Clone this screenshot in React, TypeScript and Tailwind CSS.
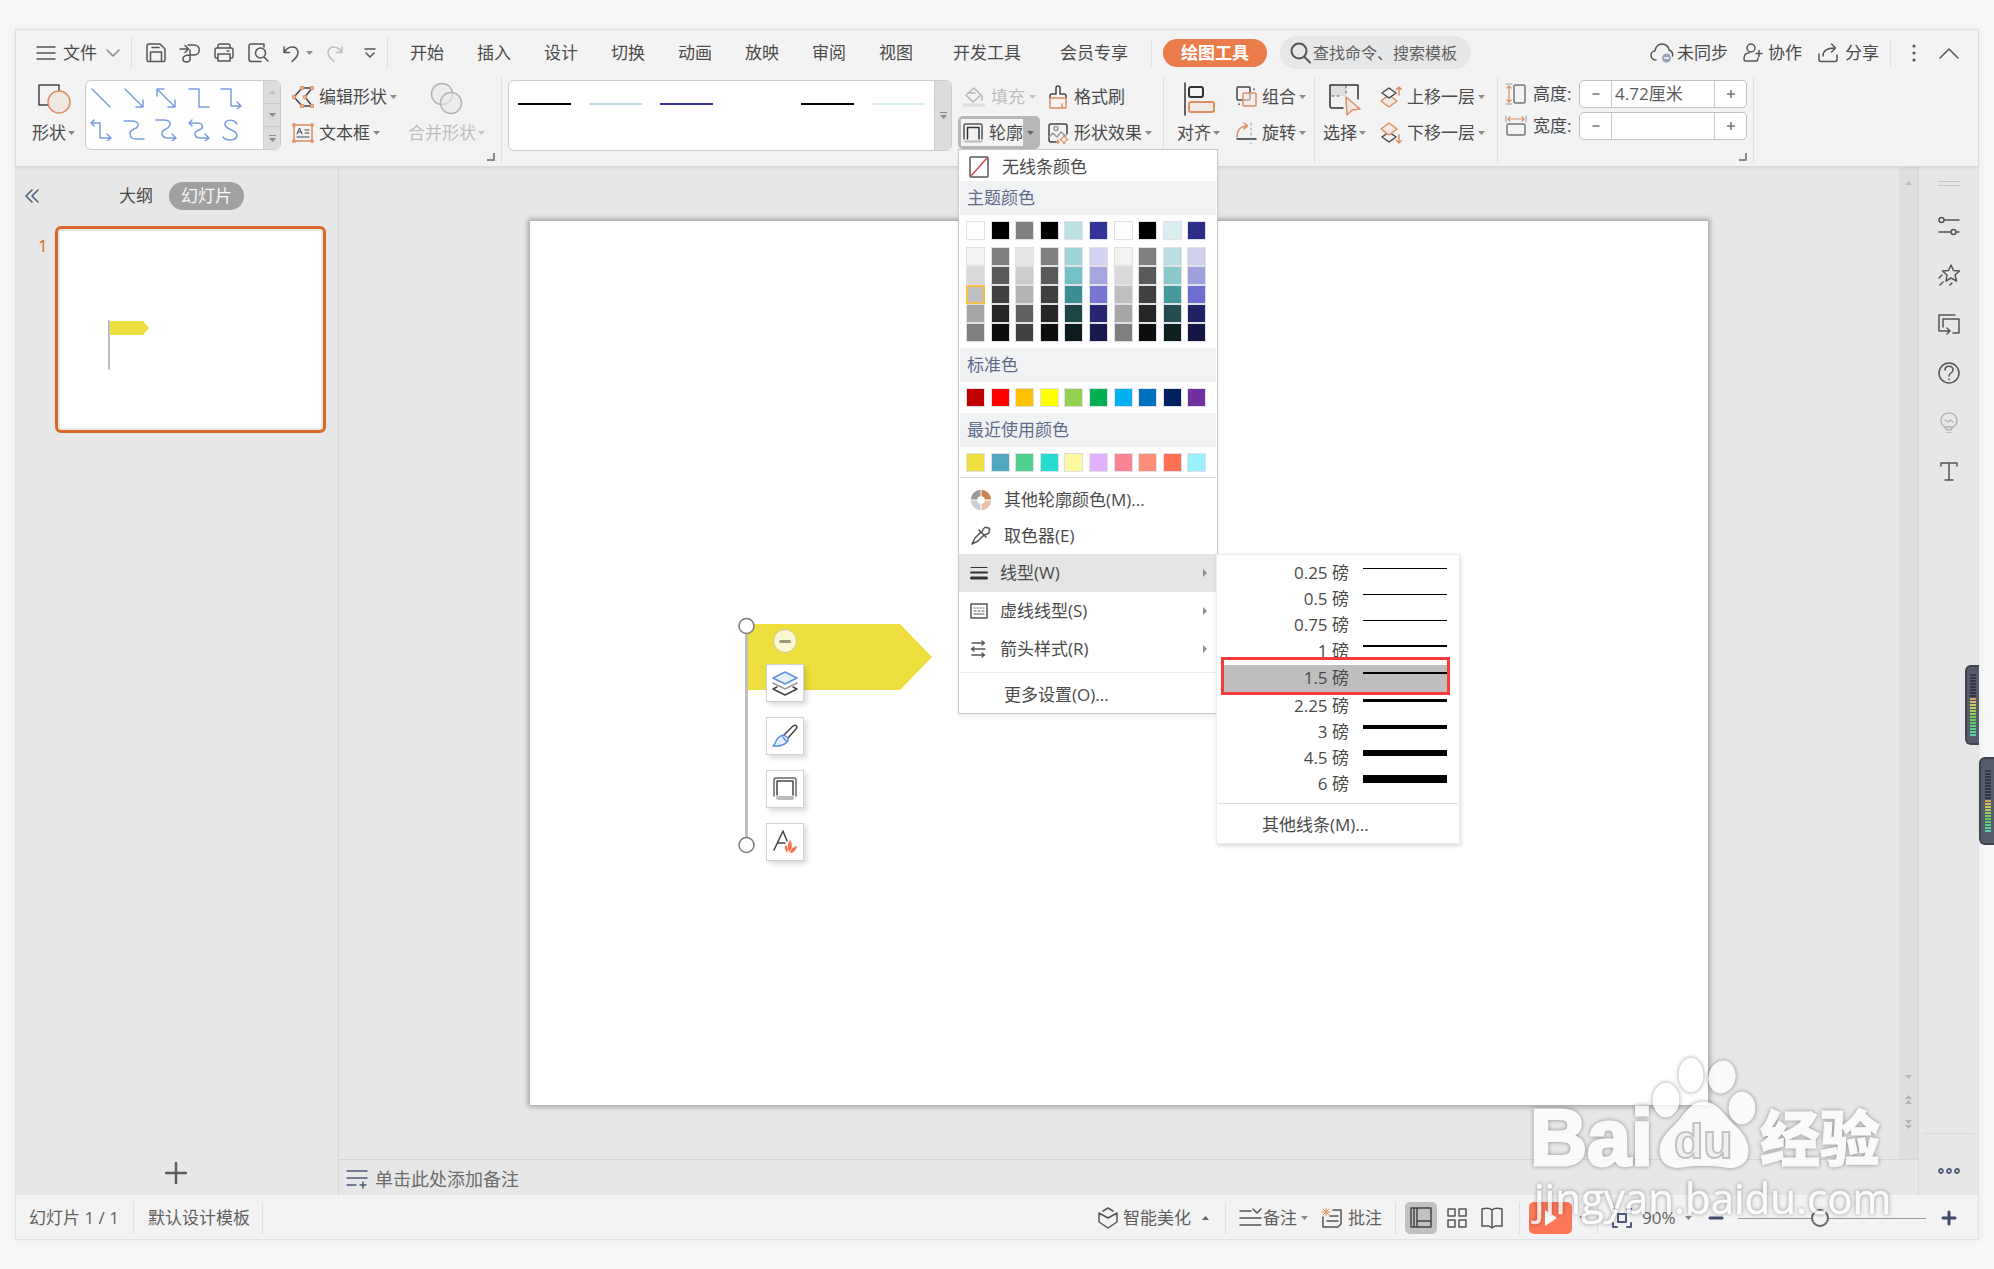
import React from "react";

const INK = "#555555";
const ORANGE = "#dc8f63";
const BLUE = "#7b9edc";

const tabs = ["开始", "插入", "设计", "切换", "动画", "放映", "审阅", "视图"];

const themeColors = ["#ffffff", "#000000", "#808080", "#000000", "#bbe0e3", "#333399", "#ffffff", "#000000", "#daedef", "#2d2d8a"];
const themeShades = [
  ["#f2f2f2", "#808080", "#e6e6e6", "#808080", "#9fd4d8", "#d2d2f0", "#f2f2f2", "#808080", "#badde0", "#cfcfee"],
  ["#d9d9d9", "#595959", "#cccccc", "#595959", "#73c1c6", "#a5a5e0", "#d9d9d9", "#595959", "#8bc8cb", "#a0a0df"],
  ["#bfbfbf", "#404040", "#b3b3b3", "#404040", "#3b8e94", "#7777d2", "#bfbfbf", "#404040", "#469a9e", "#6e6ed0"],
  ["#a6a6a6", "#262626", "#606060", "#262626", "#1d4548", "#262673", "#a6a6a6", "#262626", "#234d4f", "#212165"],
  ["#7f7f7f", "#0d0d0d", "#404040", "#0d0d0d", "#0c1b1d", "#19194d", "#7f7f7f", "#0d0d0d", "#0e1f20", "#161645"],
];
const standardColors = ["#c00000", "#ff0000", "#ffc000", "#ffff00", "#92d050", "#00b050", "#00b0f0", "#0070c0", "#002060", "#7030a0"];
const recentColors = ["#efdf3e", "#4fa8bf", "#50d18d", "#26dccf", "#fdf99f", "#e2b0ff", "#fb8494", "#fd8e7a", "#ff7150", "#9af0fa"];

const weights = [
  { label: "0.25 磅", line: 1 },
  { label: "0.5 磅", line: 1 },
  { label: "0.75 磅", line: 1 },
  { label: "1 磅", line: 2 },
  { label: "1.5 磅", line: 2 },
  { label: "2.25 磅", line: 3 },
  { label: "3 磅", line: 4 },
  { label: "4.5 磅", line: 6 },
  { label: "6 磅", line: 8 },
];

const lineStyles = ["#000000", "#bbe0e3", "#333399", "#ffffff", "#000000", "#daedef"];

// connectors of the shape gallery, 22x22 each
const connectors = [
  "M2 2L20 20",
  "M2 2L20 20M20 13V20H13",
  "M2 2L20 20M20 13V20H13M2 9V2H9",
  "M1 2H11V20H21",
  "M1 2H11V19H20M17 15L21 19L17 22",
  "M4 1L1 4L4 7M1 4H10V19H20M17 15L21 19L17 22",
  "M1 2H8C19 2 15 9 11 10C5 12 6 20 13 20H21",
  "M1 1H8C19 1 15 8 11 10C5 12 6 19 13 19H20M17 15L21 19L17 22",
  "M4 1L1 4L4 7M1 4H8C17 4 15 10 11 11C5 13 6 19 13 19H20M17 15L21 19L17 22",
  "M17 5C13 -1 4 1 5 6C6 11 18 11 17 17C16 22 6 22 3 18",
];

const Svg = ({ w = 22, h = 22, stroke = INK, sw = 1.5, className = "", children }: any) => (
  <svg
    width={w}
    height={h}
    viewBox={`0 0 ${w} ${h}`}
    fill="none"
    stroke={stroke}
    strokeWidth={sw}
    strokeLinecap="round"
    strokeLinejoin="round"
    className={`shrink-0 ${className}`}
    aria-hidden="true"
  >
    {children}
  </svg>
);

const Caret = ({ fill = "#8a8a8a", up = false, className = "" }: any) => (
  <svg width="7" height="4" viewBox="0 0 7 4" className={`shrink-0 ${className}`} aria-hidden="true">
    <path d={up ? "M0 4H7L3.5 0Z" : "M0 0H7L3.5 4Z"} fill={fill} />
  </svg>
);

const Divider = ({ className = "" }: any) => <div className={`w-px shrink-0 bg-[#e0e0e0] ${className}`} />;

const Launcher = () => (
  <Svg w={8} h={8} stroke="#8a8a8a" sw={2} className="absolute right-1.5 bottom-[5px]">
    <path d="M7 0V7H0" />
  </Svg>
);

const SmallButton = ({ icon, label, caret = true, muted = false }: any) => (
  <button className={`flex h-9 items-center ${muted ? "text-[#bdbdbd]" : ""}`}>
    <span className="mr-[5px] flex w-[22px] shrink-0 justify-center">{icon}</span>
    {label}
    {caret && <Caret className="ml-[3px]" fill={muted ? "#c4c4c4" : "#8a8a8a"} />}
  </button>
);

const BigButton = ({ icon, label, muted = false }: any) => (
  <button className={`flex flex-col items-center ${muted ? "text-[#bdbdbd]" : ""}`}>
    <span className="flex h-9 items-center pt-[3px]">{icon}</span>
    <span className="flex h-9 items-center gap-0.5">
      {label}
      <Caret fill={muted ? "#c4c4c4" : "#8a8a8a"} />
    </span>
  </button>
);

const MenuBar = () => (
  <div className="flex h-11 items-center pt-px">
    <button className="ml-5 flex items-center">
      <Svg w={20} h={14}>
        <path d="M1 1H19M1 7H19M1 13H19" />
      </Svg>
      <span className="ml-[7px]">文件</span>
      <Svg w={14} h={8} stroke="#8c8c8c" className="ml-[9px]">
        <path d="M1 1L7 7L13 1" />
      </Svg>
    </button>
    <Divider className="ml-[11px] h-8" />
    <div className="ml-[13px] flex items-center gap-3">
      <button aria-label="保存">
        <Svg>
          <path d="M2 4Q2 2 4 2H15L20 7V18Q20 19.500 18.500 19.500H3.500Q2 19.500 2 18ZM7 5.500H14M5.500 19V10H16.500V19" />
        </Svg>
      </button>
      <button aria-label="输出为PDF">
        <Svg>
          <path d="M1 7H9M6 3.500L9.500 7L6 10.500M9 3H15C22 3 22 13 15 13H11V17C11 21 4 21 4 17C4 14 7 13 11 13M11 8V13" />
        </Svg>
      </button>
      <button aria-label="打印">
        <Svg>
          <path d="M5 6V4Q5 2 7 2H15Q17 2 17 4V6M5 16H3.500Q2 16 2 14.500V8Q2 6 4 6H18Q20 6 20 8V14.500Q20 16 18.500 16H17M5 12H17V19H5ZM14 9H16" />
        </Svg>
      </button>
      <button aria-label="打印预览">
        <Svg>
          <path d="M17 5V2H4Q2 2 2 4V17Q2 19.500 4 19.500H14M17.500 15.500L21 19" />
          <circle cx="13.500" cy="11" r="5" />
        </Svg>
      </button>
      <button aria-label="撤销" className="flex items-center">
        <Svg w={20} h={20}>
          <path d="M3 4V9.500H8.500M3.500 9C7 2.500 16 2 17 9C17.500 13 14 16 11 18.500" />
        </Svg>
        <Caret className="ml-[5px]" />
      </button>
      <button aria-label="恢复">
        <Svg w={20} h={20} stroke="#bdbdbd">
          <path d="M17 4V9.500H11.500M16.500 9C13 2.500 4 2 3 9C2.500 13 6 16 9 18.500" />
        </Svg>
      </button>
    </div>
    <button aria-label="自定义快速访问工具栏" className="ml-[19px]">
      <Svg w={12} h={12}>
        <path d="M1 2H11M2 6L6 10L10 6" />
      </Svg>
    </button>
    <Divider className="ml-[11px] h-8" />
    <nav className="ml-[22px] flex items-center gap-[33px]">
      {tabs.map((t) => (
        <button key={t}>{t}</button>
      ))}
    </nav>
    <button className="ml-10">开发工具</button>
    <button className="ml-[39px]">会员专享</button>
    <Divider className="ml-[23px] h-7" />
    <button className="ml-[11px] h-7 rounded-full bg-[#e97c4a] px-[18px] font-bold text-white">绘图工具</button>
    <label className="ml-[13px] flex h-[33px] w-[191px] items-center rounded-full bg-[#e6e7e9] pl-2.5">
      <Svg sw={2}>
        <circle cx="9" cy="9" r="7.500" />
        <path d="M14.500 15L20 20.500" />
      </Svg>
      <input aria-label="查找" placeholder="查找命令、搜索模板" className="min-w-0 flex-1 bg-transparent pl-px text-base outline-none placeholder:text-[#5f5f5f]" />
    </label>

    <div className="ml-auto flex items-center pr-[19px]">
      <button className="flex items-center">
        <Svg w={24}>
          <path d="M6 18C-1 17 0 9 5 9C6 3 10 2 12 2C16 2 19 5 19 8C22 9 23 11 22.500 14" />
          <circle cx="16.500" cy="16" r="4.500" fill="#98a3b8" stroke="none" />
          <path d="M14.500 16H18.500" stroke="#fff" />
        </Svg>
        <span className="ml-[3px]">未同步</span>
      </button>
      <button className="ml-3.5 flex items-center">
        <Svg>
          <circle cx="9" cy="6" r="4" />
          <path d="M7 11C3 11 2 14 2 17Q2 19 4 19H14Q16 19 16 16M14 11.500H20M17 8.500V14.500" />
        </Svg>
        <span className="ml-1">协作</span>
      </button>
      <button className="ml-[15px] flex items-center">
        <Svg>
          <path d="M2 12V17Q2 19.500 4 19.500H18Q20 19.500 20 17V13M6 14C6 9 10 6 18 6M14.500 2L18.500 6L14.500 10" />
        </Svg>
        <span className="ml-1.5">分享</span>
      </button>
      <Divider className="ml-[11px] h-7" />
      <button aria-label="更多" className="ml-5">
        <Svg w={6} h={18} stroke="none">
          <circle cx="3" cy="2" r="1.600" fill={INK} />
          <circle cx="3" cy="9" r="1.600" fill={INK} />
          <circle cx="3" cy="16" r="1.600" fill={INK} />
        </Svg>
      </button>
      <button aria-label="折叠功能区" className="ml-[22px]">
        <Svg w={20} h={12}>
          <path d="M1 11L10 2L19 11" />
        </Svg>
      </button>
    </div>
  </div>
);

const OutlineIcon = () => (
  <Svg w={20} h={20}>
    <path d="M1 16V2.500Q1 1 2.500 1H17.500Q19 1 19 2.500V16" />
    <path d="M4.500 16V4.500H16V16" stroke="#333" />
    <path d="M1.500 18.500H18.500" stroke="#bcbcbc" strokeWidth="2" />
  </Svg>
);

const SwatchRow = ({ colors, selected = -1 }: any) => (
  <div className="grid grid-cols-10 pr-[5px] pl-[7px]">
    {colors.map((c: string, i: number) => (
      <button
        key={i}
        aria-label={c}
        className={`h-[19px] w-[19px] border ${i === selected ? "border-2 border-[#f9bd4c]" : "border-[#dfe1e6]"}`}
        style={{ backgroundColor: c }}
      />
    ))}
  </div>
);

const SectionTitle = ({ children }: any) => (
  <h3 className="mx-px flex h-[34px] items-center bg-[#f0f2f4] pl-[7px] text-[#5f6b87]">{children}</h3>
);

const WeightMenu = () => (
  <div className="absolute top-0 left-full z-30 -ml-px w-[244px] border border-[#ececec] bg-white shadow-[1px_2px_4px_rgba(0,0,0,0.15)]">
    <div className="relative flex h-[242px] flex-col pt-[5px]">
      {weights.map((w) => (
        <button
          key={w.label}
          className={`mr-3 ml-[7px] flex flex-1 items-center justify-end ${w.label === "1.5 磅" ? "my-px bg-[#bebebe]" : ""}`}
        >
          <span className="mr-3.5">{w.label}</span>
          <span className="flex h-6 w-[84px] items-center pb-2.5">
            <span className="w-full bg-black" style={{ height: w.line }} />
          </span>
        </button>
      ))}
      <div className="pointer-events-none absolute top-[102px] right-[9px] left-1 h-[38px] border-[3px] border-[#f83b3b]" />
    </div>
    <div className="mx-px mt-1.5 border-t border-[#dcdcdc]" />
    <button className="flex h-[39px] items-center pt-0.5 pl-[45px]">其他线条(M)...</button>
  </div>
);

const MenuArrow = () => (
  <svg width="4" height="8" viewBox="0 0 4 8" className="mr-2.5 ml-auto" aria-hidden="true">
    <path d="M0 0L4 4L0 8Z" fill="#8f8f8f" />
  </svg>
);

const OutlineMenu = () => (
  <div className="absolute top-full left-0 z-20 w-[260px] border border-[#c9c9c9] bg-white text-[#4a4a4a] shadow-[0_2px_4px_rgba(0,0,0,0.08)]">
    <button className="flex h-[31px] items-center pt-0.5 pl-[9px]">
      <Svg w={22} h={22}>
        <rect x="2" y="1" width="18" height="20" rx="1" />
        <path d="M3 20L19 2" stroke="#d1494a" />
      </Svg>
      <span className="ml-3">无线条颜色</span>
    </button>
    <SectionTitle>主题颜色</SectionTitle>
    <div className="pt-1.5">
      <SwatchRow colors={themeColors} />
    </div>
    <div className="pt-[7px] pb-1.5">
      {themeShades.map((row, i) => (
        <SwatchRow key={i} colors={row} selected={i === 2 ? 0 : -1} />
      ))}
    </div>
    <SectionTitle>标准色</SectionTitle>
    <div className="py-1.5">
      <SwatchRow colors={standardColors} />
    </div>
    <SectionTitle>最近使用颜色</SectionTitle>
    <div className="pt-1.5 pb-[5px]">
      <SwatchRow colors={recentColors} />
    </div>
    <div className="mx-px border-t border-[#dcdcdc] pt-1">
      <button className="flex h-9 w-full items-center pl-2.5">
        <Svg w={22} h={22} sw={6.5} stroke="none">
          <path d="M11 4A7 7 0 0 1 18 11" stroke="#cf8450" strokeLinecap="butt" />
          <path d="M18 11A7 7 0 0 1 11 18" stroke="#e8c1ab" strokeLinecap="butt" />
          <path d="M11 18A7 7 0 0 1 4 11" stroke="#cfcfcf" strokeLinecap="butt" />
          <path d="M4 11A7 7 0 0 1 11 4" stroke="#9b9b9b" strokeLinecap="butt" />
          <path d="M11 0V22M0 11H22" stroke="#fff" strokeWidth="1" />
        </Svg>
        <span className="ml-3">其他轮廓颜色(M)...</span>
      </button>
      <button className="flex h-9 w-full items-center pl-2.5">
        <Svg w={22} h={22}>
          <path d="M2 19L5 13L11 7L14 10L8 16L2 19ZM9 5L16 12M12 7C13 3 16 1 17 3C20 2 20 5 19 6C20 8 18 9 14 10" />
        </Svg>
        <span className="ml-3">取色器(E)</span>
      </button>
    </div>
    <div className="relative">
      <button className="flex h-[38px] w-full items-center bg-[#e5e5e5] pl-[11px]">
        <Svg w={18} h={14} stroke="#333" sw={1}>
          <path d="M1 1.500H17" />
          <path d="M1 6.500H17" strokeWidth="2" />
          <path d="M1.500 12H16.500" strokeWidth="3" />
        </Svg>
        <span className="ml-3">线型(W)</span>
        <MenuArrow />
      </button>
      <WeightMenu />
    </div>
    <button className="flex h-[38px] w-full items-center pl-[11px]">
      <Svg w={18} h={16}>
        <rect x="1" y="1" width="16" height="14" />
        <path d="M4 5H14" strokeDasharray="1 2" strokeWidth="1" />
        <path d="M4 8H14" strokeDasharray="2 2" strokeWidth="1" />
        <path d="M4 11H14" strokeWidth="1" />
      </Svg>
      <span className="ml-3">虚线线型(S)</span>
      <MenuArrow />
    </button>
    <button className="flex h-[38px] w-full items-center pl-[11px]">
      <Svg w={18} h={18} sw={1.4}>
        <path d="M2 3H14M12 1L14.500 3L12 5M15 9H2M4 7L1.500 9L4 11M2 15H14M12 13L14.500 15L12 17" />
      </Svg>
      <span className="ml-3">箭头样式(R)</span>
      <MenuArrow />
    </button>
    <div className="mx-px mt-1 border-t border-[#ececec]" />
    <button className="flex h-10 items-center pt-1 pl-[45px]">更多设置(O)...</button>
  </div>
);

const SpinField = ({ id, label, value, icon }: any) => (
  <div className="flex items-center">
    <span className="flex w-[22px] justify-center">{icon}</span>
    <label htmlFor={id} className="ml-1.5 w-[46px]">
      {label}
    </label>
    <div className="flex h-7 w-[168px] overflow-hidden rounded-[5px] border border-[#c2c2c2] bg-white">
      <button aria-label={`减小${label}`} className="flex w-[31px] items-center justify-center">
        <Svg w={8} h={8} stroke="#777">
          <path d="M1 4H7" />
        </Svg>
      </button>
      <input id={id} defaultValue={value} className="min-w-0 flex-1 border-x border-[#c9c9c9] pl-[3px] text-[#5c5c5c] outline-none" />
      <button aria-label={`增大${label}`} className="flex w-[31px] items-center justify-center">
        <Svg w={8} h={8} stroke="#777">
          <path d="M0 4H8M4 0V8" />
        </Svg>
      </button>
    </div>
  </div>
);

const Ribbon = () => (
  <div className="flex h-[92px]">
    <div className="relative flex items-start pt-[5px] pr-4 pl-4">
      <BigButton
        label="形状"
        icon={
          <Svg w={34} h={32}>
            <rect x="2" y="2" width="20" height="20" stroke="#444" />
            <circle cx="22" cy="19" r="11" fill="#f0e8e3" stroke={ORANGE} />
          </Svg>
        }
      />
      <div className="mt-px ml-2.5 flex h-[70px] w-[196px] shrink-0 overflow-hidden rounded-md border border-[#cccccc] bg-white">
        <div className="grid flex-1 auto-rows-[32px] grid-cols-5 content-start pt-px pr-2.5 pl-1">
          {connectors.map((d, i) => (
            <button key={i} aria-label={`连接符${i + 1}`}>
              <Svg stroke={BLUE}>
                <path d={d} />
              </Svg>
            </button>
          ))}
        </div>
        <div className="flex w-[17px] flex-col border-l border-[#cfcfcf] bg-[#dcdcdc]">
          <button aria-label="上一行" className="flex flex-1 items-center justify-center">
            <Caret up fill="#c0c0c0" />
          </button>
          <button aria-label="下一行" className="flex flex-1 items-center justify-center border-y border-[#cacaca]">
            <Caret />
          </button>
          <button aria-label="更多形状" className="flex flex-1 flex-col items-center justify-center gap-0.5">
            <span className="h-px w-[7px] bg-[#8a8a8a]" />
            <Caret />
          </button>
        </div>
      </div>
      <div className="ml-[11px] flex flex-col">
        <SmallButton
          label="编辑形状"
          icon={
            <Svg>
              <path d="M10 2L2 11L10 20H20L13 11L20 2Z" stroke="#444" />
              {[[10, 2], [20, 2], [2, 11], [13, 11], [10, 20], [20, 20]].map(([x, y]) => (
                <circle key={`${x}-${y}`} cx={x} cy={y} r="1.500" stroke={ORANGE} fill="#f3f3f3" />
              ))}
            </Svg>
          }
        />
        <SmallButton
          label="文本框"
          icon={
            <Svg h={20}>
              <rect x="2" y="2" width="18" height="16" stroke={ORANGE} />
              <path d="M5 11L7.500 5L10 11M6 9H9M13 7H17M13 10H17M5 14H17" stroke="#444" strokeWidth="1" />
              {[[2, 2], [20, 2], [2, 18], [20, 18]].map(([x, y]) => (
                <circle key={`${x}-${y}`} cx={x} cy={y} r="1.200" stroke={ORANGE} fill="#f3f3f3" />
              ))}
            </Svg>
          }
        />
      </div>
      <div className="ml-[11px]">
        <BigButton
          muted
          label="合并形状"
          icon={
            <Svg w={34} h={34} stroke="#b3b3b3">
              <circle cx="12" cy="12" r="10.500" fill="#e9e9e9" fillOpacity="0.600" />
              <circle cx="21" cy="21" r="10.500" fill="#e9e9e9" fillOpacity="0.600" />
            </Svg>
          }
        />
      </div>
      <Launcher />
    </div>
    <Divider className="my-[3px]" />
    <div className="flex items-start pt-[5px] pl-1.5">
      <div className="mt-px flex h-[71px] w-[444px] shrink-0 overflow-hidden rounded-md border border-[#cccccc] bg-white">
        <div className="grid flex-1 grid-cols-6 pt-[22px]">
          {lineStyles.map((c, i) => (
            <button key={i} aria-label={`线条样式${i + 1}`} className="flex items-start px-[9px]">
              <span className="h-0.5 w-full" style={{ backgroundColor: c }} />
            </button>
          ))}
        </div>
        <button aria-label="更多样式" className="flex w-[17px] flex-col items-center justify-center gap-0.5 border-l border-[#cfcfcf] bg-[#dcdcdc]">
          <span className="h-px w-[7px] bg-[#8a8a8a]" />
          <Caret />
        </button>
      </div>
      <div className="ml-1.5 flex flex-col">
        <button className="flex h-9 items-center pl-[5px] text-[#bdbdbd]">
          <Svg stroke="#b5b5b5">
            <path d="M11 2L18 9L10 16L3 9ZM5 7H12M19 10V14" />
            <path d="M1.500 19H20.500" strokeWidth="3" stroke="#dedede" />
          </Svg>
          <span className="ml-1.5">填充</span>
          <Caret fill="#c4c4c4" className="ml-1" />
        </button>
        <div className="relative mt-px w-[82px]">
          <button className="flex h-[33px] w-full items-center rounded-[5px] bg-[#b7b7b7] p-[3px]">
            <span className="flex h-full flex-1 items-center bg-[#f3f3f3] pl-0.5">
              <OutlineIcon />
              <span className="ml-1.5 whitespace-nowrap">轮廓</span>
            </span>
            <Caret fill="#666" className="mx-1" />
          </button>
          <OutlineMenu />
        </div>
      </div>
      <div className="ml-[7px] flex flex-col">
        <SmallButton
          label="格式刷"
          caret={false}
          icon={
            <Svg w={20} h={24}>
              <path d="M2 13V11Q2 9 4 9H8V3Q8 1 10 1Q12 1 12 3V9H16Q18 9 18 11V13" stroke="#444" />
              <path d="M2 13H18V23H2ZM14 19V23" stroke={ORANGE} />
            </Svg>
          }
        />
        <SmallButton
          label="形状效果"
          icon={
            <Svg>
              <path d="M10 20H4Q2 20 2 18V4Q2 2 4 2H18Q20 2 20 4V12" stroke="#444" />
              <circle cx="9" cy="6.500" r="2" stroke="#999" />
              <path d="M2 15L6 11L10 15L14 10L19 14" stroke="#999" />
              <path d="M17 13L18.500 16L21 17.500L18.500 19L17 22L15.500 19L13 17.500L15.500 16ZM11 18L12 20L11 21.500L9.500 20Z" stroke={ORANGE} strokeWidth="1.200" />
            </Svg>
          }
        />
      </div>
    </div>
    <Divider className="my-[3px] ml-[11px]" />
    <div className="flex items-start pt-[5px] pl-[13px]">
      <BigButton
        label="对齐"
        icon={
          <Svg w={32} h={34} sw={2} stroke="#333">
            <path d="M2 1V33" strokeWidth="1.500" />
            <rect x="6" y="5" width="14" height="10" rx="2" />
            <rect x="6" y="20" width="25" height="10" rx="2" stroke={ORANGE} fill="#f0e8e3" />
          </Svg>
        }
      />
      <div className="ml-[15px] flex flex-col">
        <SmallButton
          label="组合"
          icon={
            <Svg>
              <rect x="2" y="1" width="13" height="13" rx="1" stroke="#444" />
              <rect x="8" y="7" width="13" height="13" rx="1" stroke={ORANGE} fill="#f0e8e3" fillOpacity="0.600" />
              <path d="M19 3V3.500M4 18V18.500" stroke="#444" />
            </Svg>
          }
        />
        <SmallButton
          label="旋转"
          icon={
            <Svg>
              <path d="M2 15C2 8 6 4 12 4M9 1L12.500 4L9 7" stroke={ORANGE} />
              <path d="M2 17H21" stroke="#333" />
              <path d="M16 1V22" stroke="#999" strokeDasharray="2 3" strokeWidth="1" />
            </Svg>
          }
        />
      </div>
    </div>
    <Divider className="my-[3px] ml-2" />
    <div className="flex items-start pt-[5px] pl-2">
      <BigButton
        label="选择"
        icon={
          <Svg w={34} h={34}>
            <path d="M2 3H18V14H2Z" fill="#dedede" stroke="none" />
            <path d="M15 26H4Q2 26 2 24V3H30V17" stroke="#333" />
            <path d="M18 4V13M4 14H14" strokeDasharray="2 3" strokeWidth="1" />
            <path d="M18 15L32 27L24 28L19 33Z" stroke={ORANGE} fill="#f0e8e3" />
          </Svg>
        }
      />
      <div className="ml-3.5 flex flex-col">
        <SmallButton
          label="上移一层"
          icon={
            <Svg>
              <path d="M9 9L17 15L9 21L1 15Z" stroke={ORANGE} fill="#f0e8e3" />
              <path d="M9 2L16 7L9 12L2 7Z" stroke="#444" fill="#f3f3f3" />
              <path d="M19 9V1M16.500 3.500L19 1L21.500 3.500" stroke={ORANGE} />
            </Svg>
          }
        />
        <SmallButton
          label="下移一层"
          icon={
            <Svg>
              <path d="M9 10L16 15L9 20L2 15Z" stroke="#444" />
              <path d="M9 1L17 7L9 13L1 7Z" stroke={ORANGE} fill="#f0e8e3" />
              <path d="M19 13V21M16.500 18.500L19 21L21.500 18.500" stroke={ORANGE} />
            </Svg>
          }
        />
      </div>
    </div>
    <Divider className="my-[3px] ml-3" />
    <div className="relative flex flex-col gap-1 pt-1.5 pr-1.5 pl-[7px]">
      <SpinField
        id="shape-height"
        label="高度:"
        value="4.72厘米"
        icon={
          <Svg>
            <rect x="9" y="2" width="11" height="18" rx="1.500" stroke="#777" />
            <path d="M4 3V19M2 5L4 3L6 5M2 17L4 19L6 17" stroke={ORANGE} strokeWidth="1.200" />
            <path d="M1 1H7M1 21H7" stroke="#999" strokeWidth="1" />
          </Svg>
        }
      />
      <SpinField
        id="shape-width"
        label="宽度:"
        value=""
        icon={
          <Svg>
            <rect x="2" y="9" width="18" height="11" rx="1.500" stroke="#777" />
            <path d="M3 4H19M5 2L3 4L5 6M17 2L19 4L17 6" stroke={ORANGE} strokeWidth="1.200" />
            <path d="M1 1V7M21 1V7" stroke="#999" strokeWidth="1" />
          </Svg>
        }
      />
      <Launcher />
    </div>
    <Divider className="my-[3px]" />
  </div>
);

const SlidePanel = () => (
  <aside className="flex w-[323px] shrink-0 flex-col border-r border-[#d6d6d6]">
    <div className="mt-[15px] flex h-7 items-center">
      <button aria-label="收起" className="ml-2">
        <Svg w={16} h={14} stroke="#4d5a78">
          <path d="M8 1L2 7L8 13M14 1L8 7L14 13" />
        </Svg>
      </button>
      <button className="ml-[79px]">大纲</button>
      <button className="ml-4 h-7 rounded-full bg-[#a1a1a1] px-3 text-[#f8f8f8]">幻灯片</button>
    </div>
    <div className="mt-4 flex pr-3 pl-[22px]">
      <span className="mt-2 w-[17px] text-[#d9692b]">1</span>
      <button aria-label="幻灯片 1" className="h-[207px] flex-1 rounded-md border-[3px] border-[#d9692b] bg-[#e7e7e7] p-0.5">
        <span className="block h-full bg-white">
          <Svg w={60} h={60} stroke="none" className="ml-12 translate-y-[85px]">
            <path d="M1 5H35L41 12L35 19H1Z" fill="#efdf3e" />
            <path d="M1 5V53" stroke="#bfbfbf" strokeWidth="2" />
          </Svg>
        </span>
      </button>
    </div>
    <button aria-label="新建幻灯片" className="mt-auto mr-0.5 mb-[11px] self-center">
      <Svg w={22} h={22} stroke="#5c5c5c" sw={2.5}>
        <path d="M1 11H21M11 1V21" />
      </Svg>
    </button>
  </aside>
);

const FloatButton = ({ label, children }: any) => (
  <button aria-label={label} className="flex h-[38px] w-[38px] items-center justify-center border border-[#d2d2d2] bg-white shadow-[3px_3px_5px_rgba(0,0,0,0.15)]">
    <Svg w={26} h={26}>{children}</Svg>
  </button>
);

const Slide = () => (
  <div className="relative aspect-[4/3] w-[75.5%] bg-white shadow-[0_0_5px_2px_rgba(0,0,0,0.3)]">
    <Svg w={210} h={245} stroke="none" className="absolute top-[395px] left-[207px]">
      <path d="M11 8H163L195 41L163 74H11Z" fill="#efdf3e" />
      <path d="M9.500 10V229" stroke="#bfbfbf" strokeWidth="3" />
      <circle cx="9.500" cy="10" r="7.500" fill="#fff" stroke="#7b7b7b" strokeWidth="1.500" />
      <circle cx="9.500" cy="229" r="7.500" fill="#fff" stroke="#7b7b7b" strokeWidth="1.500" />
    </Svg>
    <div className="absolute top-[408px] left-[236px] flex flex-col items-center gap-[15px]">
      <button aria-label="收起工具" className="-mb-1 flex h-6 w-6 items-center justify-center rounded-full border border-[#cfc889] bg-[#fbf7d2]">
        <span className="h-[3px] w-3 rounded-full bg-[#9c9878]" />
      </button>
      <FloatButton label="叠放次序">
        <path d="M1 19L13 25L25 19M1 19L5 17M25 19L21 17" stroke="#444" />
        <path d="M1 13L13 19L25 13" stroke="#999" />
        <path d="M13 2L25 8L13 14L1 8Z" stroke="#5f8fe0" fill="#e6eefb" />
      </FloatButton>
      <FloatButton label="形状样式">
        <path d="M12 12L21 3C24 1 26 4 24 6L16 15" stroke="#444" />
        <path d="M12 12L16 15C17 20 10 24 1 23C4 21 3 18 6 15C8 13 10 12 12 12ZM10 13L14 18" stroke="#5f8fe0" fill="#e6eefb" />
      </FloatButton>
      <FloatButton label="形状轮廓">
        <path d="M2 20V4Q2 2 4 2H22Q24 2 24 4V20" stroke="#666" />
        <path d="M5 19V5H21V19" stroke="#444" />
        <path d="M6 22H20" stroke="#bcbcbc" strokeWidth="4" />
      </FloatButton>
      <FloatButton label="文字样式">
        <path d="M2 21L11 2L15 12M6 14H13" stroke="#444" />
        <path d="M15 24C12 19 13 17 14 16C16 18 16 21 15 24ZM17 23C15 18 16 14 18 11C21 15 20 20 17 23ZM18 24C19 20 21 18 25 17C24 21 22 24 18 24Z" fill="#fb6f47" stroke="none" />
      </FloatButton>
    </div>
  </div>
);

const ScrollBar = () => (
  <div className="flex w-[19px] shrink-0 flex-col items-center bg-[#dedede] pt-3.5 pb-[30px]">
    <Caret up fill="#bcbcbc" />
    <Caret fill="#b5b5b5" className="mt-auto mb-4" />
    <Caret up fill="#b5b5b5" />
    <Caret up fill="#b5b5b5" className="mt-px mb-4" />
    <Caret fill="#b5b5b5" />
    <Caret fill="#b5b5b5" className="mt-px" />
  </div>
);

const sideTools = [
  { label: "对象属性", color: INK, d: "M6 5H21M1 17H13M19 17H21M1 5A2.500 2.500 0 1 0 6 5A2.500 2.500 0 1 0 1 5M13 17A2.500 2.500 0 1 0 18 17A2.500 2.500 0 1 0 13 17" },
  { label: "动画窗格", color: INK, d: "M13 1L15.500 6.500L21.500 7L17 11L18.500 17L13 14L8 17L9 11L4.500 7L10.500 6.500ZM4 11L1 14M5 18L2 21M14 19L12 21" },
  { label: "幻灯片切换", color: INK, d: "M17 2H1V18H11M9 15L12 18L9 21M5 14V6H21V20H15" },
  { label: "帮助", color: INK, d: "M1 11A10 10 0 1 0 21 11A10 10 0 1 0 1 11M7 8C7 3 15 3 15 8C15 11 11 11 11 14M11 17V17.500" },
  { label: "灵感", color: "#b5b5b5", d: "M7 16C0 12 3 2 11 2C19 2 22 12 15 16ZM7 16L9 19H13L15 16M8 22H14M7 9L10 11L12 9L15 11" },
  { label: "文字", color: INK, d: "M3 6V3H19V6M11 3V20M7 20H15" },
];

const SideBar = () => (
  <aside className="flex w-[60px] shrink-0 flex-col items-center border-l border-[#d8d8d8]">
    <div className="mt-3.5 mb-[15px] h-[5px] w-[22px] border-y border-[#c4c4c4]" />
    {sideTools.map((t) => (
      <button key={t.label} aria-label={t.label} className="flex h-[49px] items-center">
        <Svg stroke={t.color}>
          <path d={t.d} />
        </Svg>
      </button>
    ))}
    <div className="mt-auto w-[52px] border-t border-[#d8d8d8]" />
    <button aria-label="更多工具" className="flex h-[61px] items-center pt-3">
      <Svg w={24} h={8} stroke="#4d5a78" sw={1.8}>
        <circle cx="4" cy="4" r="2" />
        <circle cx="12" cy="4" r="2" />
        <circle cx="20" cy="4" r="2" />
      </Svg>
    </button>
  </aside>
);

const StatusBar = () => (
  <footer className="flex h-11 shrink-0 items-center bg-[#f3f3f3] pt-0.5 text-[#5f5f5f]">
    <span className="ml-[13px]">幻灯片 1 / 1</span>
    <Divider className="ml-3.5 h-8" />
    <span className="ml-3.5">默认设计模板</span>
    <Divider className="ml-3 h-8" />
    <div className="ml-auto flex items-center">
      <button className="flex items-center">
        <Svg>
          <path d="M2 6V15L11 21L20 15V6M2 6L11 11L20 6M6 4L11 1L16 4" />
        </Svg>
        <span className="ml-1">智能美化</span>
        <Caret up fill="#666" className="ml-[11px]" />
      </button>
      <Divider className="ml-4 h-8" />
      <button className="ml-[13px] flex items-center">
        <Svg w={24}>
          <path d="M1 4H12M1 11H22M1 18H22M14 2L18 6L22 2" />
        </Svg>
        备注
        <Caret className="ml-1" />
      </button>
      <button className="ml-[13px] flex items-center">
        <Svg>
          <path d="M12 3H20V17L17 20H2V10M9 9H17M6 14H17" />
          <path d="M5 1V9M1 5H9M2 2L8 8M8 2L2 8" stroke={ORANGE} strokeWidth="1" />
        </Svg>
        <span className="ml-[5px]">批注</span>
      </button>
      <Divider className="ml-[13px] h-8" />
      <button aria-label="普通视图" className="ml-[9px] flex h-8 w-8 items-center justify-center rounded-[5px] bg-[#c1c1c1]">
        <Svg stroke="#444">
          <path d="M1 1H21V20H1ZM7 1V20M7 14H21M4 1V20" />
        </Svg>
      </button>
      <button aria-label="浏览视图" className="ml-[9px]">
        <Svg>
          <path d="M2 2H9V9H2ZM13 2H20V9H13ZM2 13H9V20H2ZM13 13H20V20H13Z" />
        </Svg>
      </button>
      <button aria-label="阅读视图" className="ml-3">
        <Svg w={24}>
          <path d="M12 3V21M12 3C10 1 6 1 2 2V19H9L12 21L15 19H22V2C18 1 14 1 12 3" />
        </Svg>
      </button>
      <Divider className="ml-[15px] h-8" />
      <button aria-label="播放" className="ml-[9px] flex h-8 w-[43px] items-center justify-center rounded-[5px] bg-[#fc7758]">
        <svg width="14" height="18" viewBox="0 0 14 18" aria-hidden="true">
          <path d="M1 1L13 9L1 17Z" fill="#fff" />
        </svg>
      </button>
      <Caret className="ml-[7px]" />
      <Divider className="ml-[11px] h-8" />
      <button aria-label="适应窗口" className="ml-3.5">
        <Svg w={20} h={20} stroke="#4d5a78" sw={2}>
          <path d="M1 5V1H5M15 1H19V5M19 15V19H15M5 19H1V15M6 6H14V14H6Z" />
        </Svg>
      </button>
      <button className="ml-2.5 flex w-[50px] items-center justify-between">
        90%
        <Caret />
      </button>
      <button aria-label="缩小" className="ml-4">
        <Svg w={16} h={16} stroke="#3f4b68" sw={3}>
          <path d="M2 8H14" />
        </Svg>
      </button>
      <input
        type="range"
        aria-label="缩放"
        defaultValue={43}
        className="ml-3.5 h-4 w-[188px] appearance-none bg-[linear-gradient(#999,#999)] bg-[length:100%_1px] bg-center bg-no-repeat [&::-webkit-slider-thumb]:h-[18px] [&::-webkit-slider-thumb]:w-[18px] [&::-webkit-slider-thumb]:appearance-none [&::-webkit-slider-thumb]:rounded-full [&::-webkit-slider-thumb]:border-2 [&::-webkit-slider-thumb]:border-[#666666] [&::-webkit-slider-thumb]:bg-[#f3f3f3]"
      />
      <button aria-label="放大" className="mr-[21px] ml-[15px]">
        <Svg w={16} h={16} stroke="#3f4b68" sw={3}>
          <path d="M2 8H14M8 2V14" />
        </Svg>
      </button>
    </div>
  </footer>
);

const Watermark = () => (
  <svg
    width="380"
    height="180"
    viewBox="0 0 380 180"
    className="pointer-events-none absolute right-[94px] bottom-[39px] z-40 opacity-80 drop-shadow-[0_0_2px_rgba(0,0,0,0.5)]"
    fill="#ffffff"
    stroke="#ffffff"
    strokeWidth="1"
    aria-hidden="true"
  >
    <text x="10" y="115" fontSize="79" fontWeight="700" fontFamily="Liberation Sans, sans-serif" strokeWidth="3">Bai</text>
    <ellipse cx="146" cy="50" rx="13" ry="17" />
    <ellipse cx="171" cy="25" rx="12" ry="17" />
    <ellipse cx="202" cy="27" rx="13" ry="16" transform="rotate(12 202 27)" />
    <ellipse cx="222" cy="58" rx="13" ry="16" />
    <path d="M183 52C197 52 203 64 212 73C222 82 228 90 228 101C228 115 216 119 205 117C195 115 172 115 162 117C150 119 140 113 140 101C140 89 148 82 155 75C164 66 170 52 183 52Z" />
    <text x="154" y="108" fontSize="48" fontWeight="700" fontFamily="Liberation Sans, sans-serif" fill="#f2f2f2" stroke="#b9b9b9" strokeWidth="2">du</text>
    <text x="240" y="111" fontSize="60" fontWeight="900" fontFamily="Noto Sans CJK SC, sans-serif">经验</text>
    <text x="14" y="164" fontSize="42" fontWeight="400" fontFamily="Open Sans, sans-serif" strokeWidth="0.500">jingyan.baidu.com</text>
  </svg>
);

const Meter = ({ className = "", from = 8 }: any) => (
  <div className={`absolute z-30 flex flex-col items-center justify-center gap-px rounded-l-md border-y-2 border-l-2 border-[#3f434f] bg-[#565c6b] ${className}`}>
    {Array.from({ length: 21 }, (_, i) => (
      <span key={i} className="h-0.5 w-[6px]" style={{ backgroundColor: i < from ? "#343844" : `hsl(${40 + ((i - from) * 125) / (20 - from)} 55% 58%)` }} />
    ))}
  </div>
);

export default function App() {
  return (
    <div className="relative flex min-h-screen flex-col overflow-hidden bg-[#f7f8fa] px-[15px] py-[29px] font-['Open_Sans','Noto_Sans_CJK_SC',sans-serif] text-[17px] leading-6 font-normal whitespace-nowrap text-[#4a4a4a]">
      <div className="flex flex-1 flex-col border border-[#e1e3e5] bg-[#e7e7e7] shadow-[0_0_10px_rgba(0,0,0,0.06)]">
        <header className="relative z-10 border-b border-[#d9d9d9] bg-[#f3f3f3] shadow-[0_1px_3px_rgba(0,0,0,0.08)]">
          <MenuBar />
          <Ribbon />
        </header>
        <div className="flex flex-1">
          <SlidePanel />
          <div className="flex min-w-0 flex-1 flex-col">
            <div className="flex flex-1">
              <main className="flex flex-1 items-center justify-center">
                <Slide />
              </main>
              <ScrollBar />
            </div>
            <div className="flex h-9 items-center border-t border-[#d6d6d6] pt-0.5 pl-1.5">
              <Svg w={24} h={20} stroke="#4d5a78">
                <path d="M2 2H22M2 9H22M2 16H11M18 13V19M15 16H21" />
              </Svg>
              <input aria-label="备注" placeholder="单击此处添加备注" className="ml-1.5 flex-1 bg-transparent text-lg outline-none placeholder:text-[#6c6c6c]" />
            </div>
          </div>
          <SideBar />
        </div>
        <StatusBar />
      </div>
      <Meter className="top-[665px] right-[15px] h-20 w-[14px]" from={8} />
      <Meter className="top-[757px] right-0 h-[88px] w-[15px]" from={10} />
      <Watermark />
    </div>
  );
}
